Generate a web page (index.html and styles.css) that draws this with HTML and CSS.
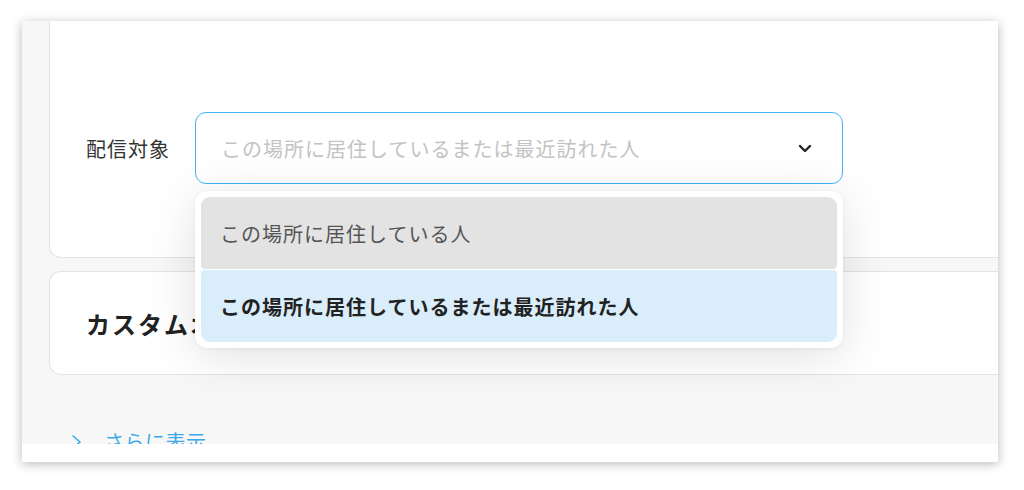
FILE: index.html
```html
<!DOCTYPE html>
<html lang="ja">
<head>
<meta charset="utf-8">
<title>配信対象</title>
<link rel="stylesheet" href="styles.css">
</head>
<body>
<div class="frame">
  <div class="content">
    <section class="card card-target">
      <div class="field">
        <span class="field-label">配信対象</span>
        <div class="select-wrap">
          <div class="select">
            <span class="select-placeholder">この場所に居住しているまたは最近訪れた人</span>
            <svg class="select-chevron" width="14" height="9" viewBox="0 0 14 9"><path d="M2 2 L7 7 L12 2" fill="none" stroke="#222" stroke-width="2.4" stroke-linecap="round" stroke-linejoin="round"/></svg>
          </div>
          <ul class="menu">
            <li class="menu-item menu-item-hover">この場所に居住している人</li>
            <li class="menu-item menu-item-selected">この場所に居住しているまたは最近訪れた人</li>
          </ul>
        </div>
      </div>
    </section>
    <section class="card card-custom">
      <h2 class="card-title">カスタムオーディエンス</h2>
    </section>
    <a class="more" href="#">
      <svg class="more-chevron" width="12" height="16" viewBox="0 0 12 16"><path d="M2 2 L9 8 L2 14" fill="none" stroke="#3aa9e8" stroke-width="1.6" stroke-linecap="round" stroke-linejoin="round"/></svg>
      <span class="more-text">さらに表示</span>
    </a>
  </div>
  <div class="footer-strip"></div>
</div>
</body>
</html>
```
FILE: styles.css
```css
* { box-sizing: border-box; }
html, body {
  margin: 0;
  padding: 0;
  background: #ffffff;
  width: 1024px;
  height: 490px;
  overflow: hidden;
  font-family: "Noto Sans CJK JP", "Noto Sans", sans-serif;
}
.frame {
  margin: 21px 26px 0 22px;
  width: 976px;
  height: 441px;
  display: flex;
  flex-direction: column;
  box-shadow: 0 2px 10px rgba(0, 0, 0, 0.28);
  background: #ffffff;
  overflow: hidden;
}
.content {
  height: 423px;
  flex: none;
  background: #f7f7f7;
  padding-left: 27px;
  display: flex;
  flex-direction: column;
  overflow: hidden;
}
.card {
  background: #ffffff;
  border: 1px solid #e4e4e4;
  border-right: none;
  flex: none;
}
.card-target {
  border-top: none;
  border-radius: 0 0 0 12px;
  height: 237px;
  padding: 91px 0 0 36px;
  position: relative;
  z-index: 2;
}
.field {
  display: flex;
  align-items: center;
  gap: 25px;
  height: 72px;
}
.field-label {
  font-size: 20px;
  letter-spacing: 1px;
  color: #333333;
  width: 84px;
  white-space: nowrap;
}
.select-wrap {
  position: relative;
  width: 648px;
}
.select {
  height: 72px;
  border: 1px solid #42b2f2;
  border-radius: 11px;
  background: #ffffff;
  display: flex;
  align-items: center;
  justify-content: space-between;
  padding: 0 30px 0 25px;
}
.select-placeholder {
  font-size: 20px;
  letter-spacing: 1px;
  color: #c3c3c3;
  white-space: nowrap;
}
.select-chevron { display: block; }
.menu {
  position: absolute;
  left: 0;
  top: 79px;
  width: 648px;
  margin: 0;
  padding: 6px;
  list-style: none;
  background: #ffffff;
  border-radius: 12px;
  box-shadow: 0 8px 50px rgba(0, 0, 0, 0.12), 0 1px 4px rgba(0, 0, 0, 0.06);
  display: flex;
  flex-direction: column;
  gap: 1px;
}
.menu-item {
  height: 72px;
  display: flex;
  align-items: center;
  padding-left: 19px;
  font-size: 20px;
  letter-spacing: 1px;
  border-radius: 9px;
  white-space: nowrap;
}
.menu-item-hover {
  background: #e3e3e3;
  color: #555555;
  border-radius: 9px 9px 4px 4px;
}
.menu-item-selected {
  background: #d9edfa;
  color: #222222;
  font-weight: 700;
  border-radius: 4px 4px 9px 9px;
}
.card-custom {
  margin-top: 13px;
  height: 104px;
  border-radius: 12px 0 0 12px;
  display: flex;
  align-items: center;
  padding-left: 36px;
}
.card-title {
  margin: 0;
  font-size: 24px;
  font-weight: 700;
  letter-spacing: 2px;
  color: #222222;
  white-space: nowrap;
}
.more {
  margin-top: 53px;
  padding-left: 22px;
  display: flex;
  align-items: center;
  gap: 21px;
  text-decoration: none;
  flex: none;
}
.more-chevron { display: block; }
.more-text {
  font-size: 20px;
  letter-spacing: 0.5px;
  color: #3aa9e8;
  line-height: 28px;
}
.footer-strip {
  height: 18px;
  flex: none;
  background: #ffffff;
}
```
